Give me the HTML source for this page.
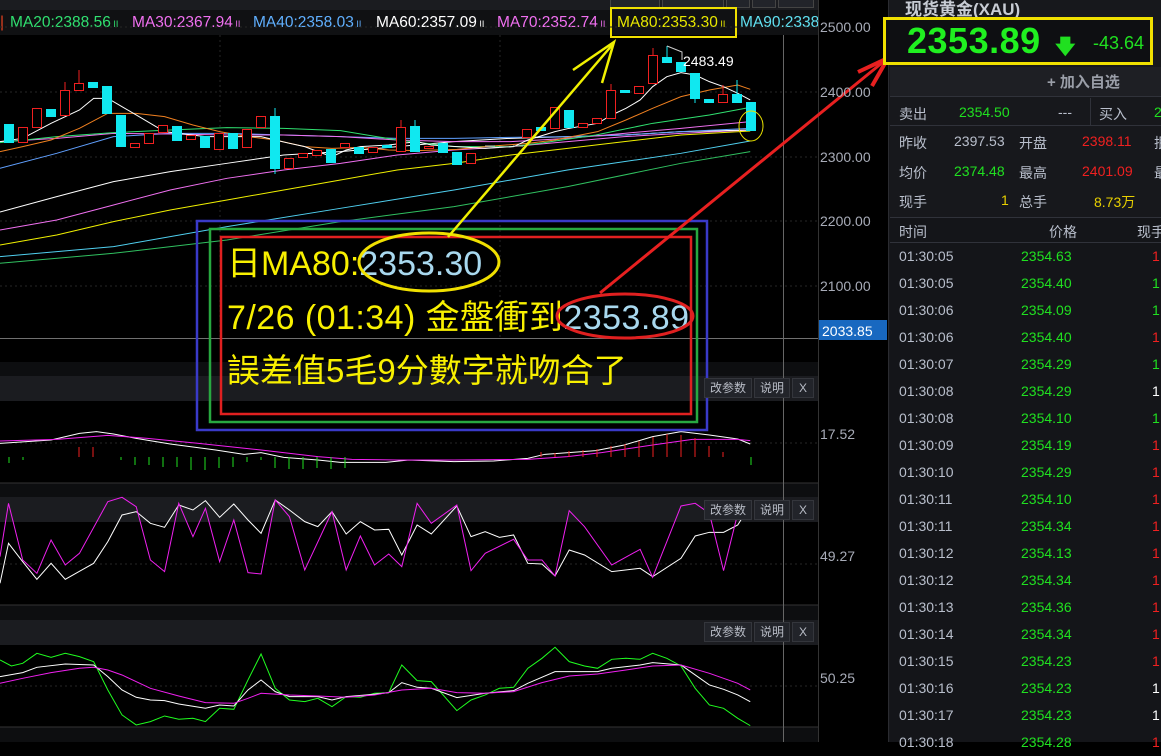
<!DOCTYPE html>
<html><head><meta charset="utf-8"><style>
*{margin:0;padding:0;box-sizing:border-box}
body{width:1161px;height:742px;background:#000;overflow:hidden;position:relative;font-family:"Liberation Sans","Noto Sans CJK SC",sans-serif}
.a{position:absolute;white-space:nowrap}
.rp{position:absolute;left:888px;top:0;width:273px;height:742px;background:#17181c;border-left:1px solid #2a2b30}
.lab{color:#b9bfcc;font-size:14px}
.btn{position:absolute;height:20px;border:1px solid #34363c;background:#22242a;color:#b8bcc6;font-size:12px;line-height:18px;text-align:center}
.lg{position:absolute;top:13px;font-size:15.5px;line-height:20px;white-space:nowrap}
.lg i{font-style:normal;font-size:9px}
</style></head><body>
<div class="a" style="left:0;top:0;width:818px;height:10px;background:#1b1c20"></div>
<div class="a" style="left:0;top:10px;width:818px;height:25px;background:#101113"></div>
<div class="a" style="left:610px;top:-12px;width:50px;height:20px;border:1px solid #444;background:#22242a"></div>
<div class="a" style="left:662px;top:-12px;width:62px;height:20px;border:1px solid #444;background:#22242a"></div>
<div class="a" style="left:726px;top:-12px;width:24px;height:20px;border:1px solid #444;background:#22242a"></div>
<div class="a" style="left:752px;top:-12px;width:24px;height:20px;border:1px solid #444;background:#22242a"></div>
<div class="a" style="left:778px;top:-12px;width:36px;height:20px;border:1px solid #444;background:#22242a"></div>
<div class="lg" style="left:0;color:#e04020">|</div>
<div class="lg" style="left:10px;color:#30e070">MA20:2388.56<i> II</i></div>
<div class="lg" style="left:132px;color:#f070f0">MA30:2367.94<i> II</i></div>
<div class="lg" style="left:253px;color:#60b0ff">MA40:2358.03<i> II</i></div>
<div class="lg" style="left:376px;color:#fff">MA60:2357.09<i> II</i></div>
<div class="lg" style="left:497px;color:#f070f0">MA70:2352.74<i> II</i></div>
<div class="lg" style="left:617px;color:#e8e800">MA80:2353.30<i> II</i></div>
<div class="lg" style="left:740px;color:#60e0f0;width:78px;overflow:hidden">MA90:2338</div>
<div class="a" style="left:610px;top:7px;width:127px;height:31px;border:2px solid #f0e000"></div>

<svg class="a" style="left:0;top:0" width="888" height="742">
<g stroke="#262626" stroke-dasharray="2,3">
<line x1="0" y1="27" x2="818" y2="27"/><line x1="0" y1="92" x2="818" y2="92"/><line x1="0" y1="157" x2="818" y2="157"/><line x1="0" y1="221" x2="818" y2="221"/><line x1="0" y1="286" x2="818" y2="286"/>
<line x1="220" y1="35" x2="220" y2="340"/><line x1="500" y1="35" x2="500" y2="340"/>
<line x1="0" y1="443" x2="818" y2="443"/><line x1="0" y1="564" x2="818" y2="564"/><line x1="0" y1="686" x2="818" y2="686"/>
</g>
<line x1="0" y1="338.5" x2="818" y2="338.5" stroke="#707070"/>
<rect x="0" y="362" width="818" height="14" fill="#0d0e10"/>
<rect x="0" y="376" width="818" height="25" fill="#1b1c20"/>
<rect x="0" y="483" width="818" height="14" fill="#0d0e10"/>
<rect x="0" y="497" width="818" height="25" fill="#1b1c20"/>
<rect x="0" y="605" width="818" height="15" fill="#0d0e10"/>
<rect x="0" y="620" width="818" height="25" fill="#1b1c20"/>
<rect x="0" y="727" width="818" height="15" fill="#0d0e10"/>
<line x1="0" y1="483" x2="818" y2="483" stroke="#333"/><line x1="0" y1="605" x2="818" y2="605" stroke="#333"/><line x1="0" y1="727" x2="818" y2="727" stroke="#333"/>
<line x1="818.5" y1="0" x2="818.5" y2="742" stroke="#333"/>
<line x1="783.5" y1="35" x2="783.5" y2="742" stroke="#666"/>

<g transform="scale(0.5675,0.3333)" fill="none">
<polyline vector-effect="non-scaling-stroke" stroke="#30c060" points="0,790 200,760 400,720 600,665 800,620 1000,560 1200,490 1322,455"/>
<polyline vector-effect="non-scaling-stroke" stroke="#50d0f0" points="0,770 200,740 400,680 600,625 800,570 1000,510 1200,460 1322,423"/>
<polyline vector-effect="non-scaling-stroke" stroke="#f0f000" points="0,735 100,705 200,665 300,630 400,600 500,570 600,540 700,510 800,490 900,465 1000,445 1100,425 1200,405 1322,393"/>
<polyline vector-effect="non-scaling-stroke" stroke="#f070f0" points="0,690 100,660 200,615 300,570 400,535 500,510 600,490 700,465 800,450 900,440 1000,425 1100,410 1200,400 1322,390"/>
<polyline vector-effect="non-scaling-stroke" stroke="#fff" points="0,636 100,590 200,545 300,515 400,490 500,465 600,455 700,440 800,425 900,415 1000,410 1100,405 1200,395 1322,390"/>
<polyline vector-effect="non-scaling-stroke" stroke="#60a0ff" points="0,505 100,460 200,410 300,400 400,400 500,405 600,410 700,415 800,415 900,412 1000,410 1100,405 1200,395 1322,385"/>
<polyline vector-effect="non-scaling-stroke" stroke="#f070f0" points="0,425 100,415 200,400 300,402 400,405 500,405 600,410 700,420 800,425 900,425 1000,415 1100,400 1200,385 1322,365"/>
<polyline vector-effect="non-scaling-stroke" stroke="#30e070" points="0,428 100,410 200,398 300,390 400,383 500,385 600,392 700,420 800,440 900,440 950,430 1050,405 1150,370 1250,345 1322,322"/>
<polyline vector-effect="non-scaling-stroke" stroke="#f08020" points="0,455 40,440 90,420 140,385 190,340 240,340 290,350 340,375 387,395 437,410 485,420 537,440 585,445 635,442 685,450 735,452 805,448 855,440 930,430 978,420 1053,395 1103,360 1150,325 1200,290 1250,270 1300,255 1322,268"/>
<polyline vector-effect="non-scaling-stroke" stroke="#fff" points="0,425 40,415 90,370 140,330 165,295 190,295 215,320 240,345 265,370 290,395 315,400 362,410 412,410 460,410 485,420 510,430 537,440 560,455 585,470 610,450 635,440 685,435 708,430 735,425 760,435 805,440 855,445 905,440 930,420 978,395 1003,385 1053,370 1078,345 1103,325 1128,300 1150,260 1175,230 1200,218 1225,225 1250,245 1275,260 1300,280 1322,300"/>
</g>
<g transform="translate(0,360) scale(0.5675,0.3333)" fill="none">
<polyline vector-effect="non-scaling-stroke" stroke="#fff" points="0,250 90,240 140,220 170,215 200,222 240,235 300,252 380,270 430,283 460,278 500,292 560,300 600,307 680,307 720,300 800,305 870,303 930,295 960,283 1050,272 1100,255 1150,230 1200,215 1250,225 1300,237 1322,252"/>
<polyline vector-effect="non-scaling-stroke" stroke="#f020f0" points="0,243 100,238 190,226 260,235 350,250 460,270 560,290 620,298 700,300 800,300 930,298 1000,290 1060,278 1150,255 1220,238 1300,238 1322,242"/>
<polyline vector-effect="non-scaling-stroke" stroke="#fff" points="0,670 15,550 40,605 65,658 90,610 115,658 140,634 165,610 190,545 215,465 240,455 265,490 290,502 315,435 340,450 362,422 387,472 412,432 437,480 460,520 485,420 510,450 537,485 560,500 585,455 610,522 635,485 660,510 685,508 708,585 735,495 760,522 805,438 830,530 855,515 880,532 905,525 930,610 955,612 978,648 1003,570 1030,585 1078,635 1128,625 1150,650 1200,595 1225,528 1250,517 1275,517 1300,495 1322,435"/>
<polyline vector-effect="non-scaling-stroke" stroke="#f020f0" points="0,590 15,430 40,600 65,640 90,540 115,615 140,580 190,425 215,412 240,440 265,600 290,635 315,430 340,530 362,445 387,605 412,480 437,638 460,642 485,420 510,470 537,630 585,455 610,630 635,528 660,615 685,582 708,620 735,430 760,490 805,435 830,632 855,580 905,538 930,600 955,600 978,648 1003,452 1030,500 1078,615 1128,568 1150,652 1200,438 1225,430 1250,460 1275,632 1300,460 1322,428"/>
<polyline vector-effect="non-scaling-stroke" stroke="#20ff20" points="0,900 20,918 40,910 65,880 90,892 115,880 140,890 165,905 190,990 215,1065 240,1095 265,1085 290,1068 315,1078 340,1075 362,1085 387,1045 412,1048 437,960 460,882 485,985 510,1020 537,1025 560,1015 585,1040 610,1010 635,1012 660,1000 685,998 708,915 735,962 760,965 805,1052 830,1020 855,1005 880,985 905,982 930,925 955,895 978,862 1003,905 1030,918 1053,925 1078,898 1103,895 1128,898 1150,880 1175,895 1200,918 1225,985 1250,1035 1275,1045 1300,1075 1322,1097"/>
<polyline vector-effect="non-scaling-stroke" stroke="#fff" points="0,950 40,938 65,922 115,912 165,915 190,950 215,990 240,1012 265,1020 290,1022 315,1032 362,1045 387,1035 412,1038 437,990 460,960 485,995 510,1010 560,1010 585,1020 610,1010 660,1003 685,998 708,968 735,982 760,985 805,1013 855,1000 905,992 930,970 978,935 1003,935 1053,935 1078,925 1128,915 1150,908 1200,915 1225,945 1250,975 1275,988 1300,1005 1322,1025"/>
<polyline vector-effect="non-scaling-stroke" stroke="#f020f0" points="0,970 40,955 90,938 140,925 165,922 190,930 215,945 265,985 315,1008 362,1028 412,1030 437,1015 460,1000 510,1005 560,1008 610,1012 660,1005 708,990 760,985 805,998 855,1000 905,995 955,968 1003,948 1053,942 1103,930 1150,918 1200,915 1250,940 1300,970 1322,990"/>
</g>
<g stroke="#20e020"><line x1="9" y1="457" x2="9" y2="463"/><line x1="23" y1="457" x2="23" y2="460"/><line x1="121" y1="457" x2="121" y2="460"/><line x1="135" y1="457" x2="135" y2="465"/><line x1="149" y1="457" x2="149" y2="465"/><line x1="163" y1="457" x2="163" y2="467"/><line x1="177" y1="457" x2="177" y2="467"/><line x1="191" y1="457" x2="191" y2="470"/><line x1="205" y1="457" x2="205" y2="470"/><line x1="219" y1="457" x2="219" y2="468"/><line x1="233" y1="457" x2="233" y2="467"/><line x1="247" y1="457" x2="247" y2="462"/><line x1="261" y1="457" x2="261" y2="460"/><line x1="275" y1="457" x2="275" y2="468"/><line x1="289" y1="457" x2="289" y2="469"/><line x1="303" y1="457" x2="303" y2="469"/><line x1="317" y1="457" x2="317" y2="468"/><line x1="331" y1="457" x2="331" y2="469"/><line x1="345" y1="457" x2="345" y2="468"/><line x1="751" y1="457" x2="751" y2="465"/></g>
<g stroke="#f02020"><line x1="79" y1="457" x2="79" y2="447"/><line x1="93" y1="457" x2="93" y2="447"/><line x1="541" y1="457" x2="541" y2="452"/><line x1="555" y1="457" x2="555" y2="453"/><line x1="569" y1="457" x2="569" y2="451"/><line x1="583" y1="457" x2="583" y2="450"/><line x1="597" y1="457" x2="597" y2="449"/><line x1="611" y1="457" x2="611" y2="446"/><line x1="625" y1="457" x2="625" y2="444"/><line x1="639" y1="457" x2="639" y2="441"/><line x1="653" y1="457" x2="653" y2="437"/><line x1="667" y1="457" x2="667" y2="434"/><line x1="681" y1="457" x2="681" y2="435"/><line x1="695" y1="457" x2="695" y2="438"/><line x1="709" y1="457" x2="709" y2="446"/><line x1="723" y1="457" x2="723" y2="452"/></g>
<g stroke="#f02020" fill="#000">
<rect x="18.5" y="127.5" width="9" height="15"/><rect x="32.5" y="108.5" width="9" height="19"/><rect x="60.5" y="90.5" width="9" height="25"/><rect x="74.5" y="83.5" width="9" height="7"/><rect x="130.5" y="143.5" width="9" height="4"/><rect x="144.5" y="133.5" width="9" height="10"/><rect x="158.5" y="125.5" width="9" height="7"/><rect x="186.5" y="135.5" width="9" height="4"/><rect x="214.5" y="133.5" width="9" height="16"/><rect x="242.5" y="129.5" width="9" height="18"/><rect x="256.5" y="116.5" width="9" height="11"/><rect x="284.5" y="158.5" width="9" height="10"/><rect x="298.5" y="153.5" width="9" height="4"/><rect x="312.5" y="150.5" width="9" height="5"/><rect x="340.5" y="143.5" width="9" height="4"/><rect x="368.5" y="147.5" width="9" height="5"/><rect x="396.5" y="127.5" width="9" height="24"/><rect x="424.5" y="146.5" width="9" height="2"/><rect x="466.5" y="153.5" width="9" height="10"/><rect x="522.5" y="129.5" width="9" height="8"/><rect x="550.5" y="107.5" width="9" height="21"/><rect x="578.5" y="123.5" width="9" height="4"/><rect x="592.5" y="118.5" width="9" height="5"/><rect x="606.5" y="90.5" width="9" height="28"/><rect x="634.5" y="86.5" width="9" height="7"/><rect x="648.5" y="55.5" width="9" height="28"/><rect x="718.5" y="94.5" width="9" height="8"/>
</g>
<g stroke="#f02020"><line x1="65" y1="82" x2="65" y2="90"/><line x1="79" y1="70" x2="79" y2="83"/><line x1="401" y1="120" x2="401" y2="127"/><line x1="611" y1="84" x2="611" y2="90"/><line x1="653" y1="48" x2="653" y2="55"/><line x1="723" y1="85" x2="723" y2="94"/></g>
<g fill="#10e8f0" stroke="#10e8f0">
<rect x="4.5" y="124.5" width="9" height="18"/><rect x="46.5" y="109.5" width="9" height="7"/><rect x="88.5" y="82.5" width="9" height="5"/><rect x="102.5" y="86.5" width="9" height="27"/><rect x="116.5" y="115.5" width="9" height="31"/><rect x="172.5" y="126.5" width="9" height="14"/><rect x="200.5" y="136.5" width="9" height="11"/><rect x="228.5" y="133.5" width="9" height="15"/><rect x="270.5" y="116.5" width="9" height="52"/><rect x="326.5" y="149.5" width="9" height="13"/><rect x="354.5" y="147.5" width="9" height="6"/><rect x="382.5" y="145.5" width="9" height="2"/><rect x="410.5" y="126.5" width="9" height="25"/><rect x="438.5" y="143.5" width="9" height="9"/><rect x="452.5" y="152.5" width="9" height="12"/><rect x="536.5" y="127.5" width="9" height="3"/><rect x="564.5" y="110.5" width="9" height="17"/><rect x="620.5" y="90.5" width="9" height="2"/><rect x="662.5" y="57.5" width="9" height="5"/><rect x="676.5" y="62.5" width="9" height="9"/><rect x="690.5" y="73.5" width="9" height="25"/><rect x="704.5" y="99.5" width="9" height="3"/><rect x="732.5" y="94.5" width="9" height="8"/><rect x="746.5" y="102.5" width="9" height="28"/>
</g>
<g stroke="#10e8f0"><line x1="275" y1="108" x2="275" y2="174"/><line x1="415" y1="120" x2="415" y2="126"/><line x1="667" y1="46" x2="667" y2="57"/><line x1="695" y1="98" x2="695" y2="103"/><line x1="737" y1="80" x2="737" y2="94"/></g>
<g stroke="#ccc"><line x1="485" y1="146" x2="495" y2="146"/><line x1="499" y1="147" x2="509" y2="147"/><line x1="513" y1="146" x2="523" y2="146"/></g>
<polyline points="667,46 682,52 682,60" fill="none" stroke="#ccc"/>
<ellipse cx="751" cy="126" rx="12" ry="15" fill="none" stroke="#e8e000"/>
<text x="683" y="66" fill="#fff" font-size="14" font-family="Liberation Sans">2483.49</text>

<rect x="197" y="221" width="510" height="209" fill="none" stroke="#3a3ac8" stroke-width="2.5"/>
<rect x="210" y="229" width="487" height="193" fill="none" stroke="#28a840" stroke-width="2.5"/>
<rect x="221" y="237" width="470" height="177" fill="none" stroke="#e02020" stroke-width="2.5"/>
<g font-family="Liberation Sans,Noto Sans CJK SC,sans-serif" font-size="34" fill="#f8f000">
<text x="227" y="275">日MA80:<tspan fill="#a8d8ee">2353.30</tspan></text>
<text x="227" y="329" textLength="462">7/26 (01:34) 金盤衝到<tspan fill="#a8d8ee">2353.89</tspan></text>
<text x="227" y="382" font-size="33">誤差值5毛9分數字就吻合了</text>
</g>
<ellipse cx="429" cy="262" rx="70" ry="29" fill="none" stroke="#f0e000" stroke-width="3"/>
<ellipse cx="625" cy="316" rx="68" ry="22" fill="none" stroke="#e02020" stroke-width="3"/>
<line x1="448" y1="237" x2="613" y2="44" stroke="#f0f000" stroke-width="2.5"/>
<polyline points="573,70 614,42 602,83" fill="none" stroke="#f0f000" stroke-width="2.5"/>
<line x1="600" y1="293" x2="888" y2="58" stroke="#e82020" stroke-width="3"/>
<polyline points="858,72 888,58 872,86" fill="none" stroke="#e82020" stroke-width="4"/>
<g font-family="Liberation Sans" font-size="14" fill="#a8acb8">
<text x="820" y="32">2500.00</text><text x="820" y="97">2400.00</text><text x="820" y="162">2300.00</text><text x="820" y="226">2200.00</text><text x="820" y="291">2100.00</text>
<text x="820" y="439">17.52</text><text x="820" y="561">49.27</text><text x="820" y="683">50.25</text>
</g>
<rect x="819" y="320" width="68" height="20" fill="#1868c0"/>
<text x="822" y="336" font-family="Liberation Sans" font-size="14" fill="#fff">2033.85</text>
</svg>
<div class="btn" style="left:704px;top:378px;width:48px">改参数</div><div class="btn" style="left:754px;top:378px;width:36px">说明</div><div class="btn" style="left:792px;top:378px;width:22px">X</div>
<div class="btn" style="left:704px;top:500px;width:48px">改参数</div><div class="btn" style="left:754px;top:500px;width:36px">说明</div><div class="btn" style="left:792px;top:500px;width:22px">X</div>
<div class="btn" style="left:704px;top:622px;width:48px">改参数</div><div class="btn" style="left:754px;top:622px;width:36px">说明</div><div class="btn" style="left:792px;top:622px;width:22px">X</div>

<div class="rp">
<div class="a" style="left:16px;top:-5px;color:#c8ccd4;font-size:17px;font-weight:bold">现货黄金(XAU)</div>
<div class="a" style="left:-6px;top:17px;width:270px;height:48px;border:3px solid #f0e000;background:#0e0f12"></div>
<div class="a" style="left:18px;top:20px;color:#20f020;font-size:36px;font-weight:bold;letter-spacing:0.5px">2353.89</div>
<div class="a" style="left:166px;top:32px;color:#20e020;font-size:20px;font-weight:bold">&#129095;</div>
<div class="a" style="left:204px;top:33px;color:#20e020;font-size:18px">-43.64</div>
<div class="a" style="left:1px;top:67px;width:272px;height:30px;background:#1e1f24;border-bottom:1px solid #30323a"></div>
<div class="a" style="left:158px;top:71px;color:#9a9ea8;font-size:15px;font-weight:bold">+ 加入自选</div>
<div class="a" style="left:1px;top:98px;width:272px;height:28px;border-bottom:1px solid #30323a"></div>
<div class="a" style="left:201px;top:98px;width:1px;height:28px;background:#30323a"></div>
<div class="a lab" style="left:10px;top:104px">卖出</div><div class="a" style="left:70px;top:104px;color:#20e020;font-size:14px">2354.50</div><div class="a lab" style="left:169px;top:104px">---</div>
<div class="a lab" style="left:210px;top:104px">买入</div><div class="a" style="left:265px;top:104px;color:#20e020;font-size:14px">2</div>
<div class="a lab" style="left:10px;top:133px">昨收</div><div class="a lab" style="left:65px;top:133px">2397.53</div><div class="a lab" style="left:130px;top:133px">开盘</div><div class="a" style="left:193px;top:133px;color:#f02020;font-size:14px">2398.11</div><div class="a lab" style="left:265px;top:133px">抿</div>
<div class="a lab" style="left:10px;top:163px">均价</div><div class="a" style="left:65px;top:163px;color:#20e020;font-size:14px">2374.48</div><div class="a lab" style="left:130px;top:163px">最高</div><div class="a" style="left:193px;top:163px;color:#f02020;font-size:14px">2401.09</div><div class="a lab" style="left:265px;top:163px">最</div>
<div class="a lab" style="left:10px;top:192px">现手</div><div class="a" style="left:112px;top:192px;color:#e8d000;font-size:14px">1</div><div class="a lab" style="left:130px;top:192px">总手</div><div class="a" style="left:205px;top:192px;color:#e8d000;font-size:14px">8.73万</div>
<div class="a" style="left:1px;top:217px;width:272px;height:1px;background:#30323a"></div>
<div class="a" style="left:1px;top:218px;width:272px;height:524px;background:#141519"></div>
<div class="a lab" style="left:10px;top:222px">时间</div><div class="a lab" style="left:160px;top:222px">价格</div><div class="a lab" style="left:248px;top:222px">现手</div>
<div class="a" style="left:1px;top:242px;width:272px;height:1px;background:#30323a"></div>
<div class="a" style="left:10px;top:243px;font-size:14px;line-height:27px;color:#b9bfcc">01:30:05<br>01:30:05<br>01:30:06<br>01:30:06<br>01:30:07<br>01:30:08<br>01:30:08<br>01:30:09<br>01:30:10<br>01:30:11<br>01:30:11<br>01:30:12<br>01:30:12<br>01:30:13<br>01:30:14<br>01:30:15<br>01:30:16<br>01:30:17<br>01:30:18</div>
<div class="a" style="left:132px;top:243px;font-size:14px;line-height:27px;color:#20e020">2354.63<br>2354.40<br>2354.09<br>2354.40<br>2354.29<br>2354.29<br>2354.10<br>2354.19<br>2354.29<br>2354.10<br>2354.34<br>2354.13<br>2354.34<br>2354.36<br>2354.34<br>2354.23<br>2354.23<br>2354.23<br>2354.28</div>
<div class="a" style="left:263px;top:243px;font-size:14px;line-height:27px;color:#f02020">1<br><span style="color:#20e020">1</span><br><span style="color:#20e020">1</span><br>1<br><span style="color:#20e020">1</span><br><span style="color:#fff">1</span><br><span style="color:#20e020">1</span><br>1<br>1<br>1<br>1<br>1<br>1<br>1<br>1<br>1<br><span style="color:#fff">1</span><br><span style="color:#fff">1</span><br>1</div>
</div>
</body></html>
